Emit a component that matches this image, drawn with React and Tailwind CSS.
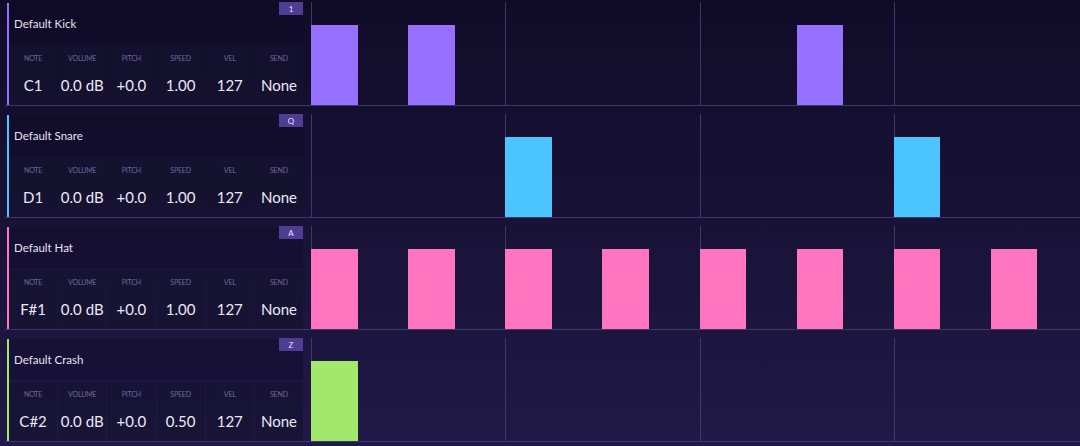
import clsx from 'clsx';

const tracks = [
  {
    name: 'Default Kick',
    key: '1',
    note: 'C1',
    speed: '1.00',
    bar: 'bg-[#9670ff]',
    edge: 'border-[#9670ff]',
    steps: [0, 2, 10],
  },
  {
    name: 'Default Snare',
    key: 'Q',
    note: 'D1',
    speed: '1.00',
    bar: 'bg-[#4cc4ff]',
    edge: 'border-[#4cc4ff]',
    steps: [4, 12],
  },
  {
    name: 'Default Hat',
    key: 'A',
    note: 'F#1',
    speed: '1.00',
    bar: 'bg-[#ff75c0]',
    edge: 'border-[#ff75c0]',
    steps: [0, 2, 4, 6, 8, 10, 12, 14],
  },
  {
    name: 'Default Crash',
    key: 'Z',
    note: 'C#2',
    speed: '0.50',
    bar: 'bg-[#a2e86b]',
    edge: 'border-[#a2e86b]',
    steps: [0],
  },
];

function Param({ label, value }) {
  return (
    <div className="flex flex-col items-center pt-[8px] bg-[#16122f]/70">
      <span className="text-[7px] leading-[8px] uppercase tracking-tight text-[#6f66a3]">
        {label}
      </span>
      <span className="mt-[14px] text-[15px] leading-[18px] text-[#ece9f6]">
        {value}
      </span>
    </div>
  );
}

function TrackRow({ track }) {
  const params = [
    ['Note', track.note],
    ['Volume', '0.0 dB'],
    ['Pitch', '+0.0'],
    ['Speed', track.speed],
    ['Vel', '127'],
    ['Send', 'None'],
  ];

  return (
    <div className="flex h-[104px] border-b border-[#3f3670]">
      {/* Track controls */}
      <div className="w-[306px] shrink-0 pl-[2px] pr-[8px] pt-px">
        <div className={clsx('h-full border-l-2 flex flex-col', track.edge)}>
          <div className="relative h-[41px] flex items-center pl-[5px] bg-[#0f0b26]/40">
            <span className="text-[11.5px] text-[#e6e3f2]">{track.name}</span>
            <span className="absolute -top-px right-0 w-[24px] h-[13px] flex items-center justify-center bg-[#4e3d92] text-[8px] text-[#e8e4ff]">
              {track.key}
            </span>
          </div>
          <div className="mt-[2px] flex-1 grid grid-cols-6 gap-x-px">
            {params.map(([label, value]) => (
              <Param key={label} label={label} value={value} />
            ))}
          </div>
        </div>
      </div>

      {/* Step grid */}
      <div className="w-[775px] shrink-0 grid grid-cols-16 gap-x-[2px]">
        {Array.from({ length: 16 }).map((_, i) => (
          <div
            key={i}
            className={clsx(
              'flex items-end',
              i % 4 === 0 && 'border-l border-[#3f3670]'
            )}
          >
            {track.steps.includes(i) && (
              <div
                className={clsx(
                  'h-[80px]',
                  track.bar,
                  i % 4 === 0 ? '-ml-px w-[calc(100%+1px)]' : 'w-full'
                )}
              />
            )}
          </div>
        ))}
      </div>
    </div>
  );
}

export default function App() {
  return (
    <div
      className="w-full h-[446px] overflow-hidden bg-linear-to-b from-[#100c28] to-[#211947] pl-[5px] pt-[2px]"
      style={{ fontFamily: 'Lato, "Noto Sans", sans-serif' }}
    >
      <div className="flex flex-col gap-[8px] w-[1086px]">
        {tracks.map((t) => (
          <TrackRow key={t.name} track={t} />
        ))}
      </div>
    </div>
  );
}
